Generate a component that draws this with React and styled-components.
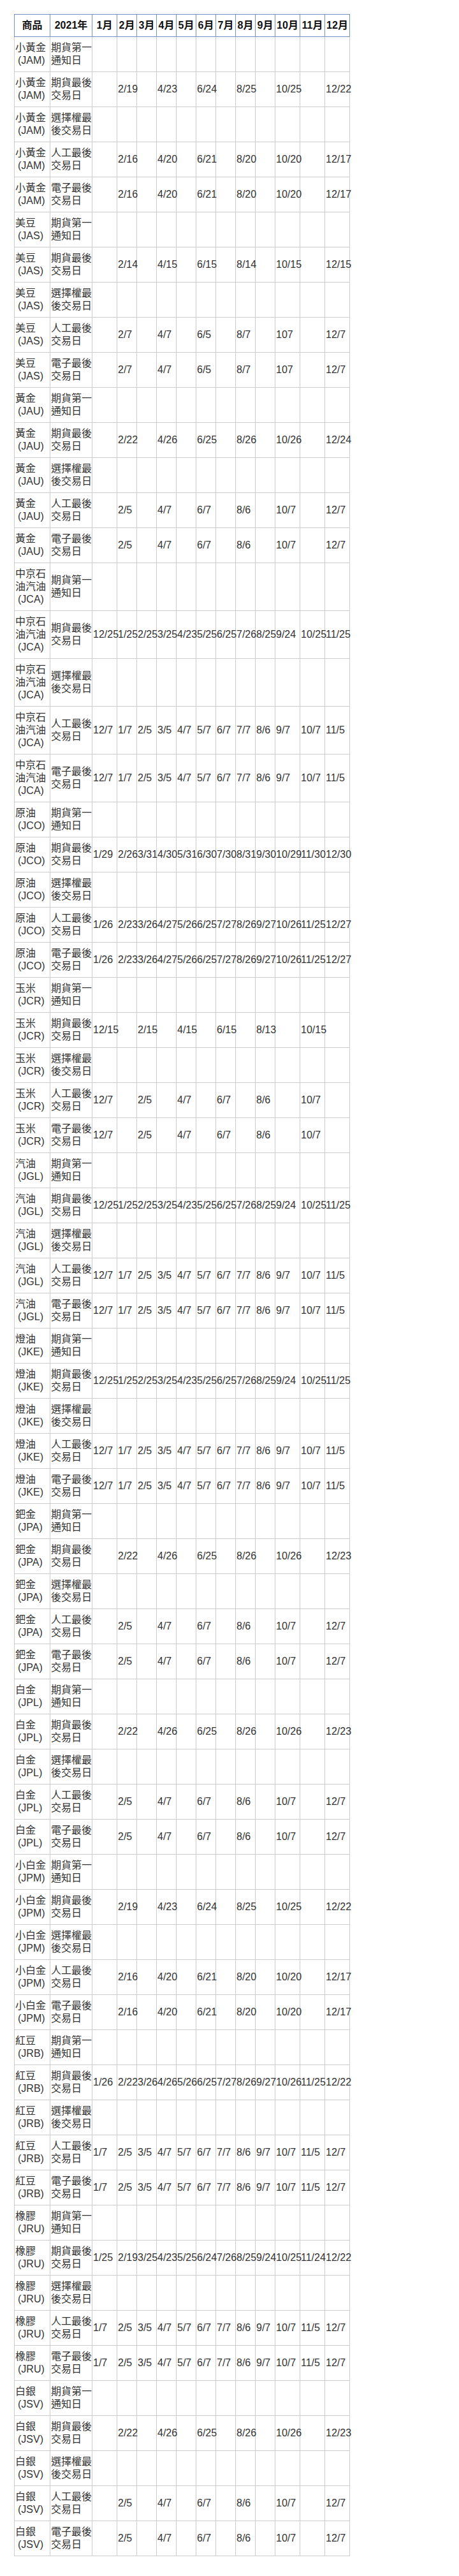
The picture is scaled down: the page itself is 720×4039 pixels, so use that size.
import React from "react";
import styled, { createGlobalStyle } from "styled-components";

const GlobalStyle = createGlobalStyle`
  html, body {
    margin: 0;
    padding: 0;
    background: #ffffff;
  }
  body {
    font-family: "Liberation Sans", "Noto Sans CJK TC", sans-serif;
  }
`;

const Page = styled.div`
  padding: 22px 0 0 22px;
  min-height: 4039px;
  box-sizing: border-box;
`;

const Table = styled.table`
  border-collapse: collapse;
  table-layout: fixed;
  width: 526px;
  font-size: 16px;
  line-height: 20px;
  color: #333333;
`;

const Col = styled.col`
  width: ${(p) => p.$w}px;
`;

const HeadCell = styled.th`
  border: 1px solid #7390c2;
  padding: 7px 0;
  font-weight: bold;
  color: #111111;
  text-align: center;
  white-space: nowrap;
  overflow: visible;
`;

const Cell = styled.td`
  border: 1px solid #cccccc;
  padding: 7px 1px;
  vertical-align: middle;
  text-align: left;
  white-space: nowrap;
  overflow: visible;
`;

const Line = styled.span`
  display: block;
`;

const Code = styled.span`
  display: block;
  padding-left: 4px;
`;

const MONTHS = ["1月", "2月", "3月", "4月", "5月", "6月", "7月", "8月", "9月", "10月", "11月", "12月"];
const WIDTHS = [56, 66, 39, 31, 31, 31, 31, 31, 31, 31, 31, 39, 39, 39];

const LABELS = [
  ["期貨第一", "通知日"],
  ["期貨最後", "交易日"],
  ["選擇權最", "後交易日"],
  ["人工最後", "交易日"],
  ["電子最後", "交易日"],
];

const even = (vals) => {
  const out = Array(12).fill("");
  vals.forEach((v, i) => {
    out[i * 2 + 1] = v;
  });
  return out;
};
const odd = (vals) => {
  const out = Array(12).fill("");
  vals.forEach((v, i) => {
    out[i * 2] = v;
  });
  return out;
};
const EMPTY = Array(12).fill("");

const JCA_LAST = ["12/25", "1/25", "2/25", "3/25", "4/23", "5/25", "6/25", "7/26", "8/25", "9/24", "10/25", "11/25"];
const JCA_MAN = ["12/7", "1/7", "2/5", "3/5", "4/7", "5/7", "6/7", "7/7", "8/6", "9/7", "10/7", "11/5"];
const JRB_MAN = ["1/7", "2/5", "3/5", "4/7", "5/7", "6/7", "7/7", "8/6", "9/7", "10/7", "11/5", "12/7"];

const mk = (name, code, last, manual) => ({
  name,
  code,
  rows: [EMPTY, last, EMPTY, manual, manual],
});

const PRODUCTS = [
  mk(["小黃金"], "JAM", even(["2/19", "4/23", "6/24", "8/25", "10/25", "12/22"]), even(["2/16", "4/20", "6/21", "8/20", "10/20", "12/17"])),
  mk(["美豆"], "JAS", even(["2/14", "4/15", "6/15", "8/14", "10/15", "12/15"]), even(["2/7", "4/7", "6/5", "8/7", "107", "12/7"])),
  mk(["黃金"], "JAU", even(["2/22", "4/26", "6/25", "8/26", "10/26", "12/24"]), even(["2/5", "4/7", "6/7", "8/6", "10/7", "12/7"])),
  mk(["中京石", "油汽油"], "JCA", JCA_LAST, JCA_MAN),
  mk(["原油"], "JCO",
    ["1/29", "2/26", "3/31", "4/30", "5/31", "6/30", "7/30", "8/31", "9/30", "10/29", "11/30", "12/30"],
    ["1/26", "2/23", "3/26", "4/27", "5/26", "6/25", "7/27", "8/26", "9/27", "10/26", "11/25", "12/27"]),
  mk(["玉米"], "JCR", odd(["12/15", "2/15", "4/15", "6/15", "8/13", "10/15"]), odd(["12/7", "2/5", "4/7", "6/7", "8/6", "10/7"])),
  mk(["汽油"], "JGL", JCA_LAST, JCA_MAN),
  mk(["燈油"], "JKE", JCA_LAST, JCA_MAN),
  mk(["鈀金"], "JPA", even(["2/22", "4/26", "6/25", "8/26", "10/26", "12/23"]), even(["2/5", "4/7", "6/7", "8/6", "10/7", "12/7"])),
  mk(["白金"], "JPL", even(["2/22", "4/26", "6/25", "8/26", "10/26", "12/23"]), even(["2/5", "4/7", "6/7", "8/6", "10/7", "12/7"])),
  mk(["小白金"], "JPM", even(["2/19", "4/23", "6/24", "8/25", "10/25", "12/22"]), even(["2/16", "4/20", "6/21", "8/20", "10/20", "12/17"])),
  mk(["紅豆"], "JRB",
    ["1/26", "2/22", "3/26", "4/26", "5/26", "6/25", "7/27", "8/26", "9/27", "10/26", "11/25", "12/22"],
    JRB_MAN),
  mk(["橡膠"], "JRU",
    ["1/25", "2/19", "3/25", "4/23", "5/25", "6/24", "7/26", "8/25", "9/24", "10/25", "11/24", "12/22"],
    JRB_MAN),
  mk(["白銀"], "JSV", even(["2/22", "4/26", "6/25", "8/26", "10/26", "12/23"]), even(["2/5", "4/7", "6/7", "8/6", "10/7", "12/7"])),
];

function ProductCell({ name, code }) {
  return (
    <Cell>
      {name.map((n) => (
        <Line key={n}>{n}</Line>
      ))}
      <Code>({code})</Code>
    </Cell>
  );
}

function LabelCell({ label }) {
  return (
    <Cell>
      <Line>{label[0]}</Line>
      <Line>{label[1]}</Line>
    </Cell>
  );
}

export default function App() {
  return (
    <>
      <GlobalStyle />
      <Page>
        <Table>
          <colgroup>
            {WIDTHS.map((w, i) => (
              <Col key={i} $w={w} />
            ))}
          </colgroup>
          <thead>
            <tr>
              <HeadCell>商品</HeadCell>
              <HeadCell>2021年</HeadCell>
              {MONTHS.map((m) => (
                <HeadCell key={m}>{m}</HeadCell>
              ))}
            </tr>
          </thead>
          <tbody>
            {PRODUCTS.map((p) =>
              p.rows.map((vals, ri) => (
                <tr key={p.code + ri}>
                  <ProductCell name={p.name} code={p.code} />
                  <LabelCell label={LABELS[ri]} />
                  {vals.map((v, ci) => (
                    <Cell key={ci}>{v}</Cell>
                  ))}
                </tr>
              ))
            )}
          </tbody>
        </Table>
      </Page>
    </>
  );
}
